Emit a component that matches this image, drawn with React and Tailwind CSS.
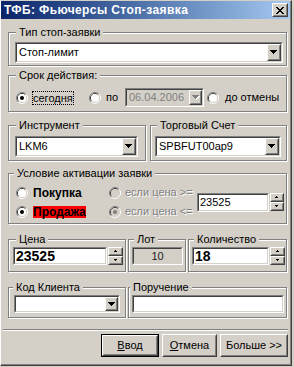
import React from 'react';

// classic 3D frames
const Sunken = ({ className = '', inner = 'bg-white', children }) => (
  <div className={`border border-t-[#808080] border-l-[#808080] border-r-white border-b-white ${className}`}>
    <div className={`h-full w-full border border-t-[#404040] border-l-[#404040] border-r-[#D4D0C8] border-b-[#D4D0C8] ${inner}`}>
      {children}
    </div>
  </div>
);

const Raised = ({ className = '', children }) => (
  <div className={`border border-t-white border-l-white border-r-[#404040] border-b-[#404040] bg-[#D4D0C8] ${className}`}>
    <div className="h-full w-full border border-t-[#D4D0C8] border-l-[#D4D0C8] border-r-[#808080] border-b-[#808080] flex items-center justify-center">
      {children}
    </div>
  </div>
);

const ARROWS = {
  down: { w: 7, h: 4, d: 'M0 0h7v1H0zM1 1h5v1H1zM2 2h3v1H2zM3 3h1v1H3z' },
  up: { w: 3, h: 2, d: 'M1 0h1v1H1zM0 1h3v1H0z' },
  down3: { w: 3, h: 2, d: 'M0 0h3v1H0zM1 1h1v1H1z' },
};

const Tri = ({ kind = 'down', disabled = false }) =>
{
  const a = ARROWS[kind];
  return (
    <svg width={a.w + 1} height={a.h + 1} viewBox={`0 0 ${a.w + 1} ${a.h + 1}`} shapeRendering="crispEdges" className="block">
      {disabled && <path d={a.d} fill="#fff" transform="translate(1 1)" />}
      <path d={a.d} fill={disabled ? '#808080' : '#000'} />
    </svg>
  );
};

const XGlyph = () => (
  <svg width="8" height="7" viewBox="0 0 8 7" shapeRendering="crispEdges" className="block">
    <path
      fill="#000"
      d="M0 0h2v1H0zM6 0h2v1H6zM1 1h2v1H1zM5 1h2v1H5zM2 2h4v1H2zM3 3h2v1H3zM2 4h4v1H2zM1 5h2v1H1zM5 5h2v1H5zM0 6h2v1H0zM6 6h2v1H6z"
    />
  </svg>
);

const Radio = ({ checked = false, disabled = false }) => (
  <svg width="12" height="12" viewBox="0 0 12 12" className="block shrink-0">
    <path d="M2.11 9.89A5.5 5.5 0 0 1 9.89 2.11" fill="none" stroke="#808080" />
    <path d="M9.89 2.11A5.5 5.5 0 0 1 2.11 9.89" fill="none" stroke="#ffffff" />
    <path d="M2.82 9.18A4.5 4.5 0 0 1 9.18 2.82" fill="none" stroke="#404040" />
    <path d="M9.18 2.82A4.5 4.5 0 0 1 2.82 9.18" fill="none" stroke="#D4D0C8" />
    <circle cx="6" cy="6" r="4" fill={disabled ? '#D4D0C8' : '#ffffff'} />
    {checked && <circle cx="6" cy="6" r="2" fill={disabled ? '#808080' : '#000'} />}
  </svg>
);

const Combo = ({ value, className = '', btn = 'w-[14px]', disabled = false }) => (
  <Sunken className={className} inner={disabled ? 'bg-[#D4D0C8] flex' : 'bg-white flex'}>
    <div className={`flex-1 flex items-center pl-[2px] overflow-hidden whitespace-nowrap ${disabled ? 'text-[#808080]' : 'text-black'}`}>
      {value}
    </div>
    <Raised className={`${btn} h-full shrink-0`}>
      <Tri disabled={disabled} />
    </Raised>
  </Sunken>
);

const Spin = ({ className = '' }) => (
  <div className={`flex flex-col ${className}`}>
    <Raised className="flex-1 min-h-0"><Tri kind="up" /></Raised>
    <Raised className="flex-1 min-h-0"><Tri kind="down3" /></Raised>
  </div>
);

const Group = ({ label, className = '', legend = 'ml-[7px]', children }) => (
  <fieldset className={`border border-[#808080] shadow-[inset_1px_1px_0_#fff,1px_1px_0_#fff] ${className}`}>
    <legend className={`${legend} px-[3px] bg-[#D4D0C8] leading-[13px] whitespace-nowrap`}>{label}</legend>
    {children}
  </fieldset>
);

const Button = ({ children, className = '', isDefault = false }) =>
  isDefault ? (
    <div className={`border border-black ${className}`}>
      <Raised className="w-full h-full">{children}</Raised>
    </div>
  ) : (
    <Raised className={className}>{children}</Raised>
  );

const TitleBar = () => (
  <div className="h-[18px] flex items-center bg-linear-to-r from-[#0A246A] to-[#A6CAF0] pl-[3px] pr-[2px]">
    <span className="flex-1 text-white font-bold text-[12px] tracking-[0.4px] leading-[13px] whitespace-nowrap">
      ТФБ: Фьючерсы Стоп-заявка
    </span>
    <Raised className="w-[16px] h-[14px]"><XGlyph /></Raised>
  </div>
);

const disabledText = 'text-[#808080] [text-shadow:1px_1px_0_#fff]';

export default function App()
{
  return (
    <div className="w-[294px] h-[367px] bg-[#D4D0C8] font-['Liberation_Sans',Arial,sans-serif] text-[11px] leading-[13px] text-black">
      <div className="w-[292px] h-[366px] border border-l-white border-t-[#D4D0C8] border-r-[#404040] border-b-[#404040]">
        <div className="h-full border-r border-b border-r-[#808080] border-b-[#808080] flex flex-col">

          <TitleBar />

          <div className="ml-[7px] w-[280px] flex flex-col">

            <Group label="Тип стоп-заявки" className="mt-[7px] w-[279px]">
              <div className="pl-[6px] pt-[3px] pb-[2px]">
                <Combo value="Стоп-лимит" className="w-[268px] h-[21px]" />
              </div>
            </Group>

            <Group label="Срок действия:" className="mt-[3px] w-[279px]">
              <div className="flex items-center h-[19px] pl-[7px] mt-[6px] mb-[4px]">
                <div className="w-[73px] flex items-center">
                  <Radio checked />
                  <span className="ml-[4px] border border-dotted border-black leading-[12px]">сегодня</span>
                </div>
                <div className="w-[36px] flex items-center">
                  <Radio />
                  <span className="ml-[5px]">по</span>
                </div>
                <Combo value="06.04.2006" className="w-[79px] h-[19px]" btn="w-[13px]" disabled />
                <div className="ml-[3px] flex items-center">
                  <Radio />
                  <span className="ml-[6px]">до отмены</span>
                </div>
              </div>
            </Group>

            <div className="mt-[7px] flex">
              <Group label="Инструмент" className="w-[138px]">
                <div className="pl-[6px] pt-[4px] pb-[3px]">
                  <Combo value="LKM6" className="w-[123px] h-[21px]" />
                </div>
              </Group>
              <Group label="Торговый Счет" legend="ml-[6px]" className="ml-[4px] w-[137px]">
                <div className="pl-[4px] pt-[4px] pb-[3px]">
                  <Combo value="SPBFUT00ap9" className="w-[126px] h-[21px]" />
                </div>
              </Group>
            </div>

            <Group label="Условие активации заявки" legend="ml-[5px]" className="mt-[6px] w-[279px]">
              <div className="flex items-center pl-[7px] pt-[3px] pb-[2px]">
                <div className="w-[93px] flex flex-col">
                  <div className="h-[19px] flex items-center">
                    <Radio />
                    <span className="ml-[5px] font-bold text-[12px] leading-[12px]">Покупка</span>
                  </div>
                  <div className="h-[19px] flex items-center">
                    <Radio checked />
                    <span className="ml-[5px] font-bold text-[12px] leading-[12px] bg-[#FF0000]">Продажа</span>
                  </div>
                </div>
                <div className={`w-[88px] flex flex-col ${disabledText}`}>
                  <div className="h-[19px] flex items-center">
                    <Radio disabled />
                    <span className="ml-[4px]">если цена &gt;=</span>
                  </div>
                  <div className="h-[19px] flex items-center">
                    <Radio checked disabled />
                    <span className="ml-[4px]">если цена &lt;=</span>
                  </div>
                </div>
                <Sunken className="w-[72px] h-[19px]" inner="bg-white flex items-center pl-[1px]">
                  23525
                </Sunken>
                <Spin className="ml-[1px] w-[14px] h-[18px]" />
              </div>
            </Group>

            <div className="mt-[9px] flex">
              <Group label="Цена" className="w-[118px]">
                <div className="flex pl-[4px] pt-[1px] pb-[6px]">
                  <Sunken className="w-[94px] h-[18px]" inner="bg-white flex items-center pl-[1px] font-bold text-[14px]">
                    23525
                  </Sunken>
                  <Spin className="ml-[1px] w-[15px] h-[18px]" />
                </div>
              </Group>
              <Group label="Лот" legend="ml-[5px]" className="ml-[2px] w-[58px]">
                <div className="pl-[3px] pt-[1px] pb-[6px]">
                  <Sunken className="w-[51px] h-[18px]" inner="bg-[#D4D0C8] flex items-center justify-center text-[#202020]">
                    10
                  </Sunken>
                </div>
              </Group>
              <Group label="Количество" legend="ml-[5px]" className="ml-[2px] w-[99px]">
                <div className="flex pl-[3px] pt-[1px] pb-[6px]">
                  <Sunken className="w-[77px] h-[18px]" inner="bg-white flex items-center pl-[1px] font-bold text-[14px]">
                    18
                  </Sunken>
                  <Spin className="ml-[1px] w-[15px] h-[18px]" />
                </div>
              </Group>
            </div>

            <div className="mt-[9px] flex">
              <Group label="Код Клиента" legend="ml-[4px]" className="w-[118px]">
                <div className="pl-[5px] pt-[1px] pb-[4px]">
                  <Combo value="" className="w-[106px] h-[18px]" btn="w-[13px]" />
                </div>
              </Group>
              <Group label="Поручение" legend="ml-[1px]" className="ml-[2px] w-[159px]">
                <div className="pl-[3px] pt-[1px] pb-[4px]">
                  <Sunken className="w-[152px] h-[18px]" />
                </div>
              </Group>
            </div>
          </div>

          <div className="mt-[11px] mx-[2px] h-[2px] border-t border-t-[#808080] border-b border-b-white" />

          <div className="ml-[7px] w-[280px] mt-[3px] flex justify-end gap-[3px]">
            <Button isDefault className="w-[58px] h-[23px]">
              <span><span className="underline">В</span>вод</span>
            </Button>
            <Button className="w-[55px] h-[23px]">
              <span><span className="underline">О</span>тмена</span>
            </Button>
            <Button className="w-[68px] h-[23px]">
              <span>Больше &gt;&gt;</span>
            </Button>
          </div>

        </div>
      </div>
    </div>
  );
}
